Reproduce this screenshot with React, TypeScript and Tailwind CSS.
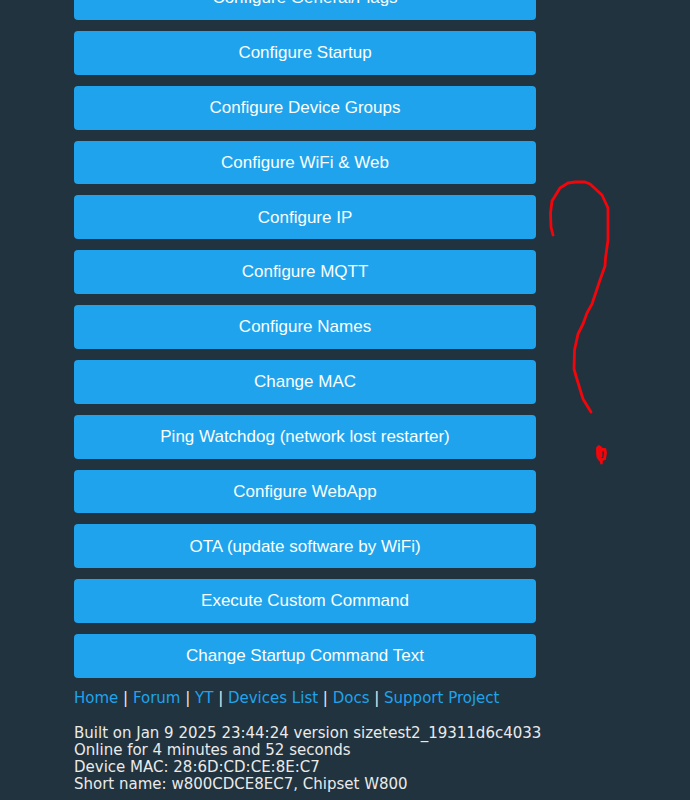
const actions = [
  "Configure General/Flags",
  "Configure Startup",
  "Configure Device Groups",
  "Configure WiFi & Web",
  "Configure IP",
  "Configure MQTT",
  "Configure Names",
  "Change MAC",
  "Ping Watchdog (network lost restarter)",
  "Configure WebApp",
  "OTA (update software by WiFi)",
  "Execute Custom Command",
  "Change Startup Command Text",
];

const links = ["Home", "Forum", "YT", "Devices List", "Docs", "Support Project"];

const status = [
  "Built on Jan 9 2025 23:44:24 version sizetest2_19311d6c4033",
  "Online for 4 minutes and 52 seconds",
  "Device MAC: 28:6D:CD:CE:8E:C7",
  "Short name: w800CDCE8EC7, Chipset W800",
];

// hand-drawn question mark over the right margin
function Scribble() {
  return (
    <svg
      className="pointer-events-none absolute left-[545px] top-[175px]"
      width="70"
      height="295"
      viewBox="545 175 70 295"
      fill="none"
      stroke="#f2060b"
      strokeWidth="2.8"
      strokeLinecap="round"
      strokeLinejoin="round"
      aria-hidden="true">
      <path d="M553 235L551 227L550.5 213L552 201L560 188L568 183L575 182L585 182L590 184L602 195L608 208L608 240L605.5 258L605 266L600 280L592 304L587 313L583 324L578 334L574.5 350L574 369L576 376L583 399L591 412" />
      <path d="M597.5 448L599 446.5L601 448L601 456L598.5 457.5L597.5 454Z" fill="#f2060b" />
      <path d="M602 449.5L605 449.5L605.5 453L604.5 459L600 460L598 457M601 459L601.5 463" />
    </svg>
  );
}

export default function App() {
  return (
    <div className="relative min-h-screen overflow-hidden bg-[#21333e] font-['DejaVu_Sans',Verdana,sans-serif] text-[#eaeaea]">
      <main className="mx-[74px] -mt-6 max-w-[462px]">
        <nav className="grid min-h-[702px] auto-rows-fr gap-[11px]" aria-label="Configuration">
          {actions.map((label) => (
            <button
              key={label}
              type="button"
              className="w-full rounded bg-[#1fa3ec] font-['Liberation_Sans',Arial,sans-serif] text-[17px] text-[#faffff]">
              {label}
            </button>
          ))}
        </nav>
        <nav className="mt-3 text-[15px] leading-[17px]" aria-label="Links">
          {links.map((label, i) => (
            <span key={label}>
              {i > 0 ? " | " : null}
              <a href="#" className="text-[#1fa3ec]">
                {label}
              </a>
            </span>
          ))}
        </nav>
        <footer className="mt-[18px] text-[15px] leading-[17px] whitespace-nowrap">
          {status.map((line) => (
            <div key={line}>{line}</div>
          ))}
        </footer>
      </main>
      <Scribble />
    </div>
  );
}
